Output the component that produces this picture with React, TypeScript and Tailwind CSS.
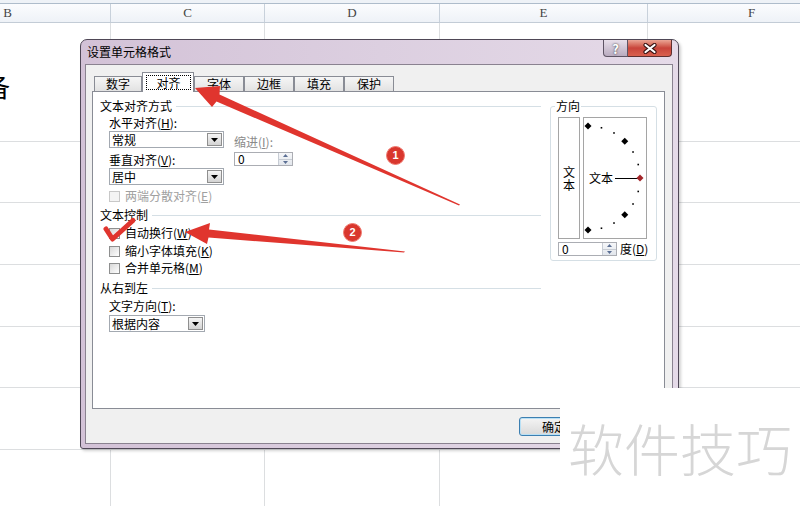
import React from "react";

const cols = ["w-[206px]", "w-[154px]", "w-[175px]", "w-[208px]", "w-[208px]"];
const letters = ["B", "C", "D", "E", "F"];
const rows = ["h-[119px]", "h-[61px]", "h-[62px]", "h-[62px]", "h-[61px]", "h-[62px]", "h-[62px]"];

function Sheet() {
    return (
        <div className="flex flex-col">
            <div className="h-[4px] bg-[#eef2f7] border-b border-[#aebccb]" />
            <div className="flex h-[19px] -ml-[95px] border-b border-[#c3ccd6] bg-gradient-to-b from-[#fbfcfe] to-[#eef2f7]">
                {letters.map((l, i) => (
                    <div
                        key={l}
                        className={`${cols[i]} shrink-0 border-r border-[#c8d1db] flex items-center justify-center font-['Liberation_Serif',serif] text-[13px] text-[#444]`}
                    >
                        {l}
                    </div>
                ))}
            </div>
            {rows.map((h, r) => (
                <div key={r} className={`flex -ml-[95px] ${h}`}>
                    {cols.map((w, i) => (
                        <div key={i} className={`${w} shrink-0 border-r border-b border-[#dcdee0]`}>
                            {r === 0 && i === 0 ? (
                                <div className="pl-[79px] pt-[50px] text-[26px] leading-[26px] text-black">备</div>
                            ) : null}
                        </div>
                    ))}
                </div>
            ))}
        </div>
    );
}

function Combo({ text, w }: { text: string; w: string }) {
    return (
        <div className={`${w} h-[17px] flex border border-[#a3a9b1] bg-white`}>
            <span className="flex-1 pl-[2px] text-[12px] leading-[15px]">{text}</span>
            <div className="w-[15px] m-px border border-[#8f8f8f] bg-gradient-to-b from-[#f5f5f5] to-[#d3d3d3] flex items-center justify-center">
                <svg width="7" height="4" viewBox="0 0 7 4">
                    <path d="M0 0H7L3.5 4Z" fill="#000" />
                </svg>
            </div>
        </div>
    );
}

function Spin({ w }: { w: string }) {
    return (
        <div className={`${w} h-[14px] flex border border-[#abadb3] bg-white`}>
            <span className="flex-1 pl-[3px] text-[12px] leading-[12px]">0</span>
            <div className="w-[14px] flex flex-col border-l border-[#c7ccd4] bg-gradient-to-b from-[#f6f7f9] to-[#e2e6ec]">
                <div className="flex-1 flex items-center justify-center">
                    <svg width="5" height="3" viewBox="0 0 5 3">
                        <path d="M0 3L2.5 0L5 3Z" fill="#5b6f94" />
                    </svg>
                </div>
                <div className="h-px bg-[#c7ccd4]" />
                <div className="flex-1 flex items-center justify-center">
                    <svg width="5" height="3" viewBox="0 0 5 3">
                        <path d="M0 0L2.5 3L5 0Z" fill="#5b6f94" />
                    </svg>
                </div>
            </div>
        </div>
    );
}

function Check({ label, k, disabled }: { label: string; k: string; disabled?: boolean }) {
    return (
        <div className="h-[14px] flex items-center gap-[5px]">
            <span
                className={`w-[11px] h-[11px] border ${disabled ? "border-[#c8c8c8] bg-[#f4f4f4]" : "border-[#8e8f8f] bg-gradient-to-br from-[#d8d8d8] to-[#ffffff]"}`}
            />
            <span className={`text-[12px] leading-[14px] ${disabled ? "text-[#a0a0a0]" : "text-black"}`}>
                {label}(<u>{k}</u>)
            </span>
        </div>
    );
}

function GroupTitle({ text }: { text: string }) {
    return (
        <div className="h-[14px] flex items-center gap-[4px]">
            <span className="text-[12px] leading-[14px]">{text}</span>
            <div className="flex-1 h-px bg-[#d5dfe5]" />
        </div>
    );
}

const dots: [number, number, "big" | "small" | "red"][] = [90, 75, 60, 45, 30, 15, 0, -15, -30, -45, -60, -75, -90].map((a) => {
    const r = (a * Math.PI) / 180;
    const kind = a === 0 ? "red" : Math.abs(a) % 45 === 0 ? "big" : "small";
    return [4 + 52 * Math.cos(r), 60 - 52 * Math.sin(r), kind];
});

function Dial() {
    return (
        <div className="relative w-[64px] h-[122px] border border-[#a5a5a5] bg-white flex items-center pl-[5px]">
            <svg className="absolute inset-0" width="62" height="120" viewBox="0 0 62 120">
                <line x1="31" y1="60.5" x2="54" y2="60.5" stroke="#000" strokeWidth="1" />
                {dots.map(([x, y, kind], i) =>
                    kind === "small" ? (
                        <rect key={i} x={x - 0.8} y={y - 0.8} width="1.6" height="1.6" fill="#000" />
                    ) : (
                        <path
                            key={i}
                            d={`M${x} ${y - 3.5}L${x + 3.5} ${y}L${x} ${y + 3.5}L${x - 3.5} ${y}Z`}
                            fill={kind === "red" ? "#a3262a" : "#000"}
                        />
                    )
                )}
            </svg>
            <span className="relative text-[12px] leading-[14px]">文本</span>
        </div>
    );
}

function Dialog() {
    const tabs = ["数字", "对齐", "字体", "边框", "填充", "保护"];
    return (
        <div className="absolute left-[80px] top-[39px] w-[599px] h-[410px] flex flex-col rounded-t-[7px] rounded-b-[3px] border border-[#4f4756] bg-gradient-to-r from-[#d3c2d7] via-[#dccfe0] to-[#e5dae8] shadow-[2px_2px_3px_rgba(0,0,0,0.18)]">
            {/* title bar */}
            <div className="h-[24px] shrink-0 flex items-start">
                <div className="pl-[6px] pt-[5px] text-[12px] leading-[14px] text-black">设置单元格格式</div>
                <div className="ml-auto mr-[6px] flex">
                    <div className="w-[25px] h-[17px] rounded-bl-[4px] border border-t-0 border-[#5e5464] bg-gradient-to-b from-[#e8dfea] to-[#b9abbf] flex items-center justify-center text-[13px] leading-[13px] font-bold text-white [text-shadow:0_0_2px_#222]">
                        ?
                    </div>
                    <div className="w-[44px] h-[17px] rounded-br-[4px] border border-t-0 border-l-0 border-[#5e2f2f] bg-gradient-to-b from-[#eaa595] via-[#c8443a] to-[#d9604e] flex items-center justify-center">
                        <svg width="14" height="11" viewBox="0 0 14 11">
                            <path d="M2.5 2L11.5 9M11.5 2L2.5 9" stroke="#3a1414" strokeWidth="4.2" strokeLinecap="round" />
                            <path d="M2.5 2L11.5 9M11.5 2L2.5 9" stroke="#fff" strokeWidth="2.2" strokeLinecap="round" />
                        </svg>
                    </div>
                </div>
            </div>

            {/* client area */}
            <div className="flex-1 ml-[4px] mr-[5px] mb-[4px] border border-[#8a8290] bg-[#f0f0f0] flex flex-col">
                <div className="mt-[7px] h-[19px] flex items-end pl-[8px]">
                    {tabs.map((t, i) =>
                        i === 1 ? (
                            <div
                                key={t}
                                className="relative z-10 top-[1px] w-[52px] h-[20px] flex border border-b-0 border-[#898c95] bg-white"
                            >
                                <span className="flex-1 ml-[3px] mr-[2px] mt-[2px] mb-[2px] border border-dotted border-black flex items-center justify-center text-[12px] leading-[14px]">
                                    {t}
                                </span>
                            </div>
                        ) : (
                            <div
                                key={t}
                                className={`${i === 0 ? "w-[48px]" : "w-[50px]"} h-[15px] flex items-center justify-center border border-b-0 border-[#898c95] bg-gradient-to-b from-[#f6f6f6] to-[#e2e2e2] text-[12px] leading-[14px]`}
                            >
                                {t}
                            </div>
                        )
                    )}
                </div>

                {/* tab panel */}
                <div className="ml-[6px] mr-[7px] h-[318px] border border-[#898c95] bg-white flex pt-[7px]">
                    <div className="flex-1 pl-[7px] flex flex-col">
                        <GroupTitle text="文本对齐方式" />
                        <div className="pl-[9px] flex flex-col">
                            <div className="mt-[3px] h-[14px] text-[12px] leading-[14px]">
                                水平对齐(<u>H</u>):
                            </div>
                            <div className="mt-[1px] flex gap-[10px]">
                                <div className="flex flex-col">
                                    <Combo text="常规" w="w-[115px]" />
                                    <div className="mt-[5px] h-[14px] text-[12px] leading-[14px]">
                                        垂直对齐(<u>V</u>):
                                    </div>
                                    <div className="mt-[1px]">
                                        <Combo text="居中" w="w-[115px]" />
                                    </div>
                                </div>
                                <div className="flex flex-col pt-[4px]">
                                    <div className="h-[14px] text-[12px] leading-[14px] text-[#8a8a8a]">
                                        缩进(<u>I</u>):
                                    </div>
                                    <div className="mt-[3px]">
                                        <Spin w="w-[59px]" />
                                    </div>
                                </div>
                            </div>
                            <div className="mt-[4px]">
                                <Check label="两端分散对齐" k="E" disabled />
                            </div>
                        </div>

                        <div className="mt-[5px]">
                            <GroupTitle text="文本控制" />
                        </div>
                        <div className="pl-[9px] flex flex-col">
                            <div className="mt-[4px]">
                                <Check label="自动换行" k="W" />
                            </div>
                            <div className="mt-[4px]">
                                <Check label="缩小字体填充" k="K" />
                            </div>
                            <div className="mt-[3px]">
                                <Check label="合并单元格" k="M" />
                            </div>
                        </div>

                        <div className="mt-[6px]">
                            <GroupTitle text="从右到左" />
                        </div>
                        <div className="pl-[9px] flex flex-col">
                            <div className="mt-[4px] h-[14px] text-[12px] leading-[14px]">
                                文字方向(<u>T</u>):
                            </div>
                            <div className="mt-[2px]">
                                <Combo text="根据内容" w="w-[96px]" />
                            </div>
                        </div>
                    </div>

                    {/* orientation */}
                    <fieldset className="ml-[9px] mr-[7px] w-[107px] self-start rounded-[3px] border border-[#d5dfe5] pl-[7px] pt-[4px] pb-[4px]">
                        <legend className="-ml-[3px] px-[1px] text-[12px] leading-[14px]">方向</legend>
                        <div className="flex gap-[3px]">
                            <div className="w-[22px] h-[122px] border border-[#a5a5a5] bg-white flex flex-col items-center justify-center text-[12px] leading-[13px]">
                                <span>文</span>
                                <span>本</span>
                            </div>
                            <Dial />
                        </div>
                        <div className="mt-[3px] flex items-center gap-[3px]">
                            <Spin w="w-[59px]" />
                            <span className="text-[12px] leading-[14px]">
                                度(<u>D</u>)
                            </span>
                        </div>
                    </fieldset>
                </div>

                {/* buttons */}
                <div className="flex-1 flex justify-end items-start pt-[8px] pr-[7px] gap-[6px]">
                    <button className="w-[70px] h-[19px] rounded-[3px] border border-[#3c7fb1] bg-gradient-to-b from-[#f4f4f4] to-[#dadada] text-[12px] leading-[17px] shadow-[inset_0_0_0_1px_#b9e0f5]">
                        确定
                    </button>
                    <button className="w-[70px] h-[19px] rounded-[3px] border border-[#707070] bg-gradient-to-b from-[#f4f4f4] to-[#dadada] text-[12px] leading-[17px]">
                        取消
                    </button>
                </div>
            </div>
        </div>
    );
}

function Marks() {
    return (
        <svg className="absolute inset-0 pointer-events-none" width="800" height="506" viewBox="0 0 800 506">
            <polygon
                points="195,88 220,86 219.5,94.5 460,204.5 459,205.5 216.5,101.5 212,107"
                fill="#e0352e"
            />
            <polygon
                points="185,232 210,223 209,229.5 405,251.5 404,252.5 208.5,237.5 207,244"
                fill="#e0352e"
            />
            <path
                d="M106 229 L112.5 239 L133 220.5"
                stroke="#e0352e"
                strokeWidth="5"
                strokeLinecap="round"
                strokeLinejoin="round"
                fill="none"
            />
        </svg>
    );
}

function Badge({ n, pos }: { n: string; pos: string }) {
    return (
        <div
            className={`absolute ${pos} w-[19px] h-[19px] rounded-full bg-[#d9372e] border border-[#f07a70] flex items-center justify-center text-[11px] leading-[11px] font-bold text-white font-['Liberation_Sans',sans-serif]`}
        >
            {n}
        </div>
    );
}

export default function App() {
    return (
        <div className="relative w-[800px] h-[506px] overflow-hidden bg-white text-black font-['Noto_Sans_CJK_SC',sans-serif]">
            <Sheet />
            <Dialog />
            <Marks />
            <Badge n="1" pos="left-[386px] top-[146px]" />
            <Badge n="2" pos="left-[343px] top-[223px]" />
            {/* watermark */}
            <div className="absolute left-[560px] top-[388px] w-[240px] h-[118px] bg-white flex items-center justify-center">
                <span className="text-[56px] leading-[56px] font-light text-[#d6d6d6]">软件技巧</span>
            </div>
        </div>
    );
}
